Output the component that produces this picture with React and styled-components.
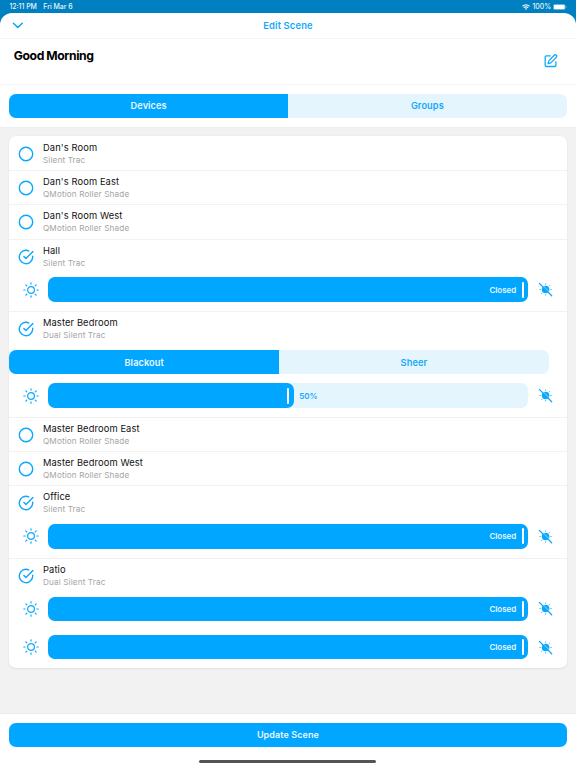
import React, { useState } from 'react';
import styled, { createGlobalStyle } from 'styled-components';

const GlobalStyle = createGlobalStyle`
  * {
    box-sizing: border-box;
  }
  body {
    margin: 0;
    background: #0080c0;
    font-family: Inter, Roboto, 'Liberation Sans', sans-serif;
    color: #111;
  }
  button {
    font: inherit;
    border: none;
    padding: 0;
    margin: 0;
    background: none;
    cursor: pointer;
  }
`;

const Screen = styled.div`
  width: 576px;
  height: 768px;
  display: flex;
  flex-direction: column;
  overflow: hidden;
`;

const StatusBar = styled.div`
  flex: none;
  display: flex;
  align-items: center;
  height: 12.8px;
  padding: 1.4px 9px 0 9.4px;
  font-size: 6.9px;
  font-weight: 500;
  line-height: 10px;
  color: #e9f5fb;
`;

const StatusDate = styled.span`
  margin-left: 6.5px;
`;

const StatusRight = styled.div`
  display: flex;
  align-items: center;
  margin-left: auto;
  gap: 2px;
`;

const Sheet = styled.div`
  flex: 1;
  min-height: 0;
  display: flex;
  flex-direction: column;
  background: #fff;
  border-radius: 12px 12px 0 0;
  overflow: hidden;
`;

const Header = styled.header`
  flex: none;
  display: grid;
  grid-template-columns: 40px 1fr 40px;
  align-items: center;
  height: 26.2px;
  border-bottom: 1px solid #f4f4f4;
`;

const HeaderButton = styled.button`
  display: flex;
  padding: 1px 0 0 12px;
  color: #00a6ff;
`;

const HeaderTitle = styled.h1`
  margin: 0;
  text-align: center;
  font-size: 9.4px;
  font-weight: 600;
  letter-spacing: 0.15px;
  color: #14a9fa;
`;

const NameSection = styled.section`
  flex: none;
  display: flex;
  justify-content: space-between;
  height: 46px;
  padding: 9px 18.5px 0 13.8px;
  border-bottom: 1px solid #f4f4f4;
`;

const SceneName = styled.h2`
  margin: 0;
  font-size: 12.2px;
  line-height: 16px;
  font-weight: 700;
  letter-spacing: -0.42px;
  color: #000;
`;

const EditButton = styled.button`
  display: flex;
  align-self: flex-start;
  padding-top: 6px;
  color: #14a9fa;
`;

const TabSection = styled.section`
  flex: none;
  height: 42.7px;
  padding: 8.6px 9.3px 0;
  border-bottom: 1px solid #ededed;
`;

const Segments = styled.div`
  display: flex;
  width: ${p => p.$width || '100%'};
  height: 24.6px;
  border-radius: 7px;
  overflow: hidden;
  background: #e5f5fe;
`;

const Segment = styled.button`
  flex: 1;
  font-size: 9.2px;
  font-weight: 600;
  letter-spacing: 0.1px;
  background: ${p => (p.$active ? '#00a6ff' : 'transparent')};
  color: ${p => (p.$active ? '#e8f7ff' : '#14a9fa')};
`;

const Content = styled.main`
  flex: 1;
  min-height: 0;
  padding: 8.6px 9.4px 0 9.3px;
  background: #f2f2f2;
`;

const Card = styled.div`
  background: #fff;
  border-radius: 7px;
  overflow: hidden;
  box-shadow: 0 0.5px 2px rgba(0, 0, 0, 0.08);
`;

const Device = styled.div`
  & + & {
    border-top: 1px solid #f2f2f2;
  }
`;

const DeviceRow = styled.div`
  display: flex;
  align-items: center;
  height: ${p => (p.$first ? '34px' : '33.2px')};
  padding: 0.8px 0 0 9.1px;
`;

const Toggle = styled.button`
  display: flex;
  width: 24.6px;
  color: #0aa8fd;
`;

const DeviceName = styled.div`
  font-size: 9.3px;
  line-height: 12px;
  letter-spacing: 0.13px;
  color: #111;
`;

const DeviceType = styled.div`
  margin-top: 1px;
  font-size: 8.2px;
  line-height: 11px;
  letter-spacing: 0.12px;
  color: #a5a5a5;
`;

const LayerTabs = styled.div`
  padding: 4.5px 0;
`;

const SliderRow = styled.div`
  display: flex;
  align-items: center;
  height: 38.2px;
  padding: 4.6px 13.6px 9px 13.4px;
  color: #0aa8fd;
`;

const Track = styled.div`
  flex: 1;
  display: flex;
  align-items: center;
  height: 24.6px;
  margin: 0 9.8px 0 9.1px;
  border-radius: 7px;
  background: #e5f5fe;
`;

const Fill = styled.div`
  display: flex;
  align-items: center;
  justify-content: flex-end;
  height: 100%;
  padding-right: 4.2px;
  border-radius: 7px;
  background: #00a6ff;
`;

const Handle = styled.div`
  width: 2.4px;
  height: 16px;
  margin-left: 5.5px;
  border-radius: 1px;
  background: #fff;
`;

const SliderLabel = styled.span`
  font-size: 8px;
  font-weight: 600;
  letter-spacing: -0.05px;
  color: ${p => (p.$inside ? '#e8f7ff' : '#14a9fa')};
  margin-left: ${p => (p.$inside ? 0 : '5.6px')};
`;

const Footer = styled.footer`
  flex: none;
  display: flex;
  flex-direction: column;
  align-items: center;
  height: 55px;
  padding: 8.6px 9.4px 0 9.3px;
  border-top: 1px solid #ededed;
`;

const UpdateButton = styled.button`
  flex: none;
  width: 100%;
  height: 24.8px;
  border-radius: 7px;
  background: #00a6ff;
  color: #e8f7ff;
  font-size: 9px;
  font-weight: 600;
  letter-spacing: 0.1px;
`;

const HomeIndicator = styled.div`
  flex: none;
  width: 177px;
  height: 2.8px;
  margin-top: 12.8px;
  border-radius: 2px;
  background: #555;
`;

const DEVICES = [
  { name: "Dan's Room", type: 'Silent Trac' },
  { name: "Dan's Room East", type: 'QMotion Roller Shade' },
  { name: "Dan's Room West", type: 'QMotion Roller Shade' },
  { name: 'Hall', type: 'Silent Trac', levels: [100] },
  { name: 'Master Bedroom', type: 'Dual Silent Trac', layers: ['Blackout', 'Sheer'], levels: [50] },
  { name: 'Master Bedroom East', type: 'QMotion Roller Shade' },
  { name: 'Master Bedroom West', type: 'QMotion Roller Shade' },
  { name: 'Office', type: 'Silent Trac', levels: [100] },
  { name: 'Patio', type: 'Dual Silent Trac', levels: [100, 100] },
];

function WifiIcon() {
  return (
    <svg width="8" height="6" viewBox="0 0 16 12" fill="none" stroke="currentColor" strokeWidth="2.4">
      <path d="M1 4.6a10 10 0 0 1 14 0" />
      <path d="M3.8 7.6a6 6 0 0 1 8.4 0" />
      <path d="M8 12 5.6 9.5a3.4 3.4 0 0 1 4.8 0Z" fill="currentColor" stroke="none" />
    </svg>
  );
}

function BatteryIcon() {
  return (
    <svg width="14" height="6" viewBox="0 0 14 6">
      <rect x="0.25" y="0.25" width="12" height="5.5" rx="1.6" fill="none" stroke="currentColor" strokeWidth="0.5" opacity="0.6" />
      <rect x="0.8" y="0.7" width="10.9" height="4.6" rx="1" fill="#fff" />
      <path d="M12.8 2v2c.6-.2.8-.6.8-1s-.2-.8-.8-1Z" fill="currentColor" opacity="0.6" />
    </svg>
  );
}

function ChevronIcon() {
  return (
    <svg width="11" height="7" viewBox="0 0 11 7" fill="none" stroke="currentColor" strokeWidth="1.4" strokeLinecap="round" strokeLinejoin="round">
      <path d="M1.4 1.3 5.8 5.6 10.2 1.3" />
    </svg>
  );
}

function EditIcon() {
  return (
    <svg width="14" height="14" viewBox="0 0 14 14" fill="none" stroke="currentColor" strokeWidth="1.3" strokeLinecap="round" strokeLinejoin="round">
      <path d="M6.3 1.8H2.2a1 1 0 0 0-1 1v8.7a1 1 0 0 0 1 1h8.7a1 1 0 0 0 1-1V7.8" />
      <path d="M10.2 1.3a1.45 1.45 0 0 1 2.1 2.1L6.8 8.9l-2.7.7.7-2.7Z" />
    </svg>
  );
}

function CheckIcon({ checked }) {
  return (
    <svg width="16" height="16" viewBox="0 0 16 16" fill="none" stroke="currentColor" strokeWidth="1.4" strokeLinecap="round" strokeLinejoin="round">
      {checked ? (
        <>
          <path d="M14.7 7.2V8A6.7 6.7 0 1 1 10.7 1.9" />
          <path d="M14.9 2.5 8 9.5 5.9 7.4" />
        </>
      ) : (
        <circle cx="8" cy="8" r="6.7" />
      )}
    </svg>
  );
}

function SunIcon() {
  return (
    <svg width="16" height="16" viewBox="0 0 16 16" fill="none" stroke="currentColor" strokeWidth="1.2" strokeLinecap="round">
      <circle cx="8" cy="8" r="3.4" />
      <path d="M8 .8v1.3M8 13.9v1.3M.8 8h1.3M13.9 8h1.3M2.8 2.8l1 1M12.2 12.2l1 1M2.8 13.2l1-1M12.2 3.8l1-1" />
    </svg>
  );
}

function SunOffIcon() {
  return (
    <svg width="15" height="15" viewBox="0 0 15 15" fill="none" stroke="currentColor" strokeLinecap="round">
      <circle cx="7.6" cy="7.5" r="3.8" fill="currentColor" stroke="none" />
      <path strokeWidth="0.8" d="M7.6 1.8v.5M7.6 12.7v.5M1.9 7.5h.5M12.8 7.5h.5M3.6 11.5l.4-.4M11.2 3.9l.4-.4" />
      <path stroke="#fff" strokeWidth="0.7" d="M2.2 .9 14.2 12.9" />
      <path strokeWidth="1.3" d="M1.4 1.4 13.7 13.7" />
    </svg>
  );
}

function Tabs({ items, width }) {
  const [active, setActive] = useState(items[0]);
  return (
    <Segments $width={width}>
      {items.map(item => (
        <Segment key={item} $active={item === active} onClick={() => setActive(item)}>
          {item}
        </Segment>
      ))}
    </Segments>
  );
}

function ShadeSlider({ level }) {
  const closed = level === 100;
  // the fill always keeps room for its handle
  const fillWidth = closed ? '100%' : `calc(${level}% + 5.6px)`;
  return (
    <SliderRow>
      <SunIcon />
      <Track>
        <Fill style={{ width: fillWidth }}>
          {closed && <SliderLabel $inside>Closed</SliderLabel>}
          <Handle />
        </Fill>
        {!closed && <SliderLabel>{level}%</SliderLabel>}
      </Track>
      <SunOffIcon />
    </SliderRow>
  );
}

function DeviceItem({ device, first }) {
  const [checked, setChecked] = useState(Boolean(device.levels));
  return (
    <Device>
      <DeviceRow $first={first}>
        <Toggle onClick={() => setChecked(!checked)}>
          <CheckIcon checked={checked} />
        </Toggle>
        <div>
          <DeviceName>{device.name}</DeviceName>
          <DeviceType>{device.type}</DeviceType>
        </div>
      </DeviceRow>
      {checked && device.layers && (
        <LayerTabs>
          <Tabs items={device.layers} width="539.5px" />
        </LayerTabs>
      )}
      {checked && device.levels && device.levels.map((level, i) => <ShadeSlider key={i} level={level} />)}
    </Device>
  );
}

function App() {
  return (
    <>
      <GlobalStyle />
      <Screen>
        <StatusBar>
          <span>12:11 PM</span>
          <StatusDate>Fri Mar 6</StatusDate>
          <StatusRight>
            <WifiIcon />
            <span>100%</span>
            <BatteryIcon />
          </StatusRight>
        </StatusBar>
        <Sheet>
          <Header>
            <HeaderButton>
              <ChevronIcon />
            </HeaderButton>
            <HeaderTitle>Edit Scene</HeaderTitle>
          </Header>
          <NameSection>
            <SceneName>Good Morning</SceneName>
            <EditButton>
              <EditIcon />
            </EditButton>
          </NameSection>
          <TabSection>
            <Tabs items={['Devices', 'Groups']} />
          </TabSection>
          <Content>
            <Card>
              {DEVICES.map((device, i) => (
                <DeviceItem key={device.name} device={device} first={i === 0} />
              ))}
            </Card>
          </Content>
          <Footer>
            <UpdateButton>Update Scene</UpdateButton>
            <HomeIndicator />
          </Footer>
        </Sheet>
      </Screen>
    </>
  );
}

export default App;
